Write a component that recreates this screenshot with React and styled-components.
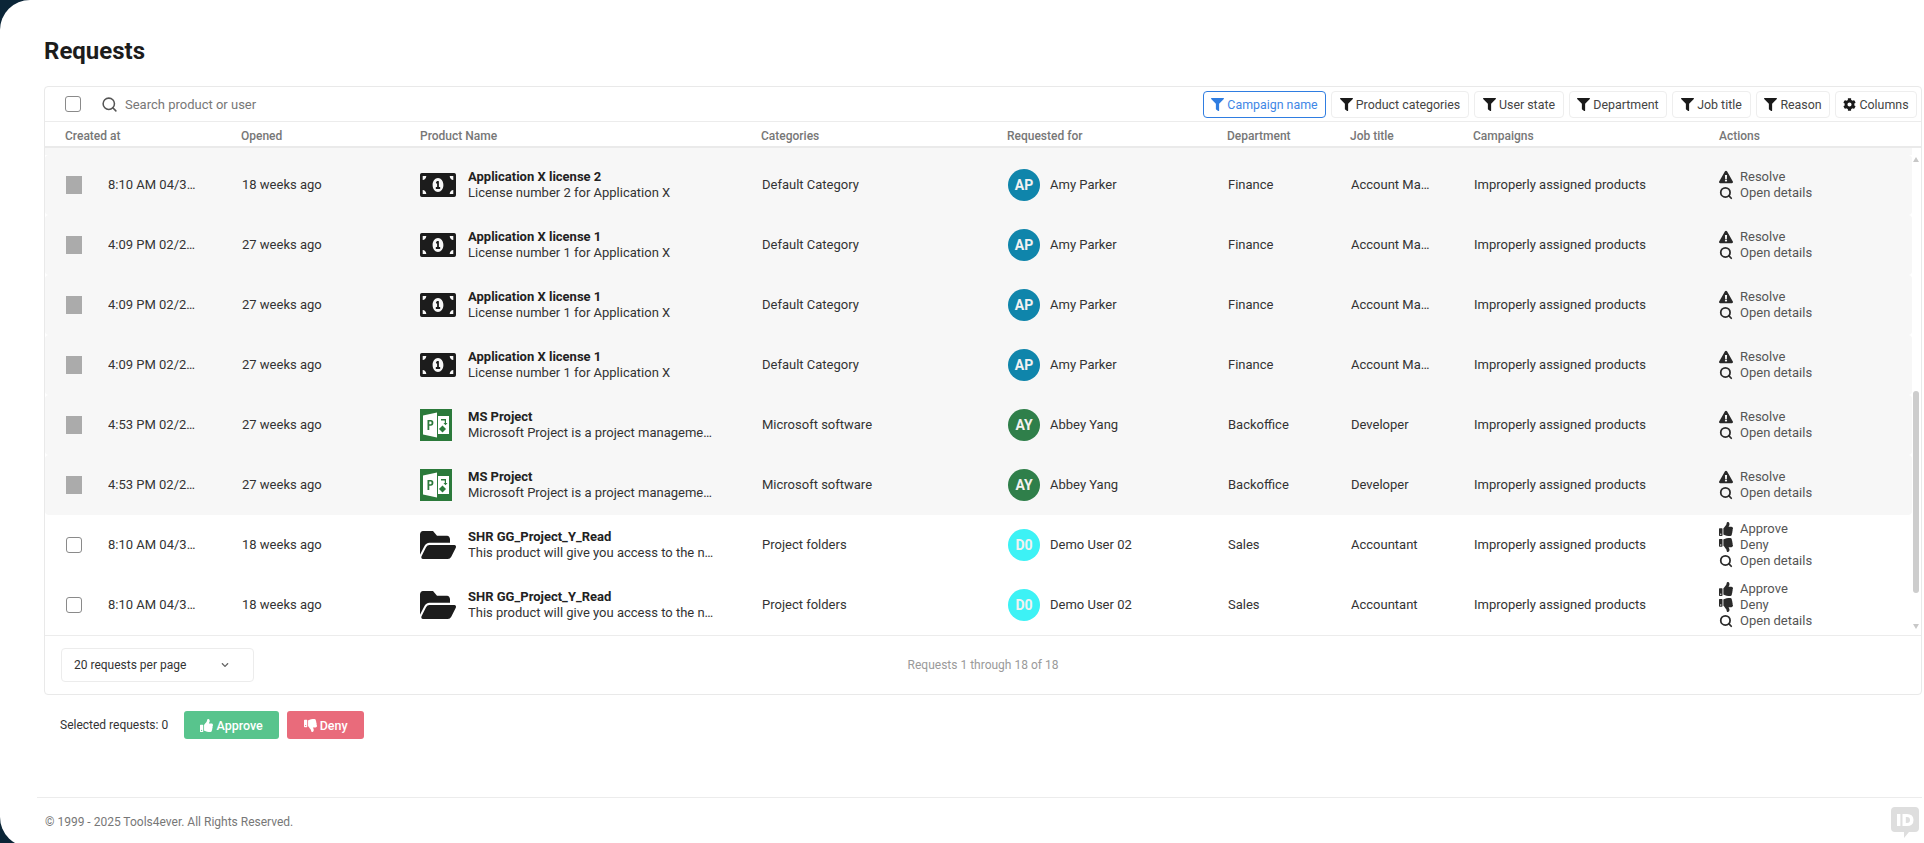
import React from "react";
import styled, { createGlobalStyle } from "styled-components";
import { Search } from "lucide-react";
import { FaExclamationTriangle, FaThumbsUp, FaThumbsDown, FaFilter, FaCog, FaFolderOpen, FaMoneyBillAlt, FaChevronDown } from "react-icons/fa";

const Global = createGlobalStyle`
  html, body { margin: 0; padding: 0; height: 100%; overflow: hidden; background: #0b2537; }
  body { font-family: Roboto, "Liberation Sans", sans-serif; font-size: 13px; color: #333; }
  * { box-sizing: border-box; }
`;

const COLS = "176px 179px 341px 246px 220px 123px 123px 246px 1fr";

const Main = styled.main`
  height: 847px;
  background: #fff;
  border-radius: 30px 0 0 30px;
  padding: 0 2px 0 37px;
  display: flex;
  flex-direction: column;
`;
const Title = styled.h1`
  margin: 0;
  height: 86px;
  padding: 35px 0 0 7px;
  font-size: 24px;
  line-height: 32px;
  font-weight: 700;
  color: #1c1c1c;
`;
const Card = styled.section`
  margin-left: 7px;
  height: 609px;
  border: 1px solid #e9e9e9;
  border-radius: 4px;
  display: flex;
  flex-direction: column;
`;
const Toolbar = styled.div`
  height: 35px;
  flex: none;
  display: flex;
  align-items: center;
  padding: 0 4px 0 20px;
  border-bottom: 1px solid #ececec;
`;
const Check = styled.span`
  width: 16px;
  height: 16px;
  flex: none;
  border: 1px solid #8a8a8a;
  border-radius: 3px;
  background: #fff;
`;
const SearchBox = styled.div`
  flex: 1;
  display: flex;
  align-items: center;
  gap: 7px;
  margin-left: 20px;
  color: #777;
  svg { color: #555; width: 17px; height: 17px; }
`;
const Filters = styled.div`
  display: flex;
  gap: 5px;
`;
const FilterBtn = styled.button`
  height: 27px;
  width: ${p => p.$w}px;
  padding: 0;
  display: flex;
  align-items: center;
  justify-content: center;
  gap: 3px;
  background: #fff;
  font: 12.4px Roboto, sans-serif;
  border-radius: 4px;
  color: ${p => (p.$active ? "#3f87e6" : "#444")};
  border: 1px solid ${p => (p.$active ? "#2f7de1" : "#eeeeee")};
  svg { width: 13px; height: 13px; color: ${p => (p.$active ? "#2f7de1" : "#1a1a1a")}; }
`;
const Head = styled.div`
  height: 26px;
  flex: none;
  display: grid;
  grid-template-columns: ${COLS};
  align-items: center;
  padding: 3px 0 0 20px;
  border-bottom: 2px solid #eaeaea;
  font-size: 12px;
  font-weight: 500;
  color: #777;
`;
const Body = styled.div`
  position: relative;
  height: 488px;
  flex: none;
  padding-right: 9px;
  border-bottom: 1px solid #ececec;
  overflow: hidden;
`;
const Sliver = styled.div`
  height: 7px;
  background: #f7f7f7;
`;
const RowWrap = styled.div`
  height: 60px;
  display: grid;
  grid-template-columns: ${COLS};
  align-items: center;
  padding-left: 20px;
  border-radius: 4px;
  background: ${p => (p.$locked ? "#f7f7f7" : "#fff")};
`;
const CreatedCell = styled.div`
  display: flex;
  align-items: center;
  padding-left: 1px;
`;
const LockedBox = styled.span`
  width: 16px;
  height: 18px;
  flex: none;
  background: #ababab;
`;
const Time = styled.span`
  margin-left: 26px;
  width: 88px;
  padding-bottom: 2px;
  white-space: nowrap;
  overflow: hidden;
  text-overflow: ellipsis;
`;
const Cell = styled.div`
  padding: 0 10px 2px 1px;
  white-space: nowrap;
  overflow: hidden;
  text-overflow: ellipsis;
`;
const JobCell = styled(Cell)`
  padding-right: 40px;
`;
const Product = styled.div`
  display: flex;
  align-items: center;
  min-width: 0;
`;
const IconSlot = styled.div`
  width: 48px;
  flex: none;
  display: flex;
  align-items: center;
  color: #1c1c1c;
`;
const ProductText = styled.div`
  width: 247px;
  padding-bottom: 1px;
  line-height: 16px;
`;
const ProductName = styled.div`
  font-weight: 700;
  color: #222;
  white-space: nowrap;
`;
const ProductDesc = styled.div`
  white-space: nowrap;
  overflow: hidden;
  text-overflow: ellipsis;
`;
const UserCell = styled.div`
  display: flex;
  align-items: center;
  gap: 10px;
  padding-left: 1px;
`;
const UserName = styled.span`
  padding-bottom: 2px;
`;
const Avatar = styled.span`
  width: 32px;
  height: 32px;
  border-radius: 50%;
  flex: none;
  display: flex;
  align-items: center;
  justify-content: center;
  color: #f2f2f2;
  font-size: 14px;
  font-weight: 700;
  background: ${p => p.$bg};
`;
const Actions = styled.div`
  display: flex;
  flex-direction: column;
  padding-bottom: 1px;
`;
const Action = styled.div`
  display: flex;
  align-items: center;
  line-height: 16px;
  color: #555;
  svg { width: 14px; height: 14px; margin-right: 7px; color: #2a2a2a; flex: none; }
`;
const Track = styled.div`
  position: absolute;
  right: 0;
  top: 0;
  bottom: 0;
  width: 10px;
`;
const Thumb = styled.div`
  position: absolute;
  left: 2px;
  right: 2px;
  top: 243px;
  height: 202px;
  background: #cdcdcd;
  border-radius: 3px;
`;
const ArrowUp = styled.div`
  position: absolute;
  left: 2px;
  top: 6px;
  border: 3px solid transparent;
  border-bottom: 5px solid #c8c8c8;
`;
const ArrowDown = styled.div`
  position: absolute;
  left: 2px;
  bottom: 3px;
  border: 3px solid transparent;
  border-top: 5px solid #c8c8c8;
`;
const Pager = styled.div`
  flex: 1;
  position: relative;
  display: flex;
  align-items: center;
  justify-content: center;
  padding: 0 16px;
  color: #9a9a9a;
  font-size: 12px;
`;
const PerPage = styled.div`
  position: absolute;
  left: 16px;
  top: 12px;
  width: 193px;
  height: 34px;
  display: flex;
  align-items: center;
  justify-content: space-between;
  padding: 0 24px 0 12px;
  border: 1px solid #ececec;
  border-radius: 4px;
  color: #333;
  font-size: 12px;
  svg { width: 8px; height: 8px; color: #666; }
`;
const Selected = styled.div`
  margin: 16px 0 0 23px;
  display: flex;
  align-items: center;
  height: 28px;
  font-size: 12px;
  color: #333;
`;
const BulkBtn = styled.button`
  height: 28px;
  width: ${p => p.$w}px;
  margin-left: ${p => p.$ml}px;
  display: flex;
  align-items: center;
  justify-content: center;
  gap: 3px;
  border: none;
  border-radius: 3px;
  color: #fff;
  font: 500 12.5px Roboto, sans-serif;
  background: ${p => p.$bg};
  svg { width: 13px; height: 13px; }
`;
const Footer = styled.footer`
  margin-top: 58px;
  height: 50px;
  position: relative;
  border-top: 1px solid #ececec;
  padding: 16px 0 0 8px;
  font-size: 12px;
  line-height: 17px;
  color: #777;
`;
const Badge = styled.div`
  position: absolute;
  right: 3px;
  top: 9px;
  width: 28px;
  height: 31px;
`;
const LicenseIcon = styled(FaMoneyBillAlt)`
  width: 36px;
  height: 24px;
`;
const FolderIcon = styled(FaFolderOpen)`
  width: 36px;
  height: 28px;
`;

const License = () => <LicenseIcon viewBox="0 64 640 384" preserveAspectRatio="none" />;
const Folder = () => <FolderIcon viewBox="0 64 576 384" preserveAspectRatio="none" />;
const MsProject = () => (
  <svg width="32" height="32" viewBox="0 0 32 32">
    <rect width="32" height="32" fill="#2b7a3b" />
    <path d="M3 6.5 L17 3.5 V28.5 L3 25.5 Z" fill="#fff" />
    <path d="M18 7 H29 V25 H18 Z" fill="#fff" />
    <path d="M7.5 11 h3.3 q2.6 0 2.6 2.8 q0 2.9 -2.6 2.9 h-1.5 v4.3 h-1.8 Z M9.3 12.6 v2.6 h1.2 q1.1 0 1.1 -1.3 q0 -1.3 -1.1 -1.3 Z" fill="#2b7a3b" />
    <path d="M21 10 h5 v4 h1.5 l-2 2.2 l-2 -2.2 h1.3 v-2.5 h-3.8 Z" fill="#2b7a3b" />
    <rect x="20" y="17.5" width="5" height="5" transform="rotate(45 22.5 20)" fill="#2b7a3b" />
  </svg>
);

const lic = (t, d) => ({ icon: <License />, name: t, desc: d, cat: "Default Category" });
const ap = { av: "AP", bg: "#0f85ab", user: "Amy Parker", dep: "Finance", job: "Account Manager" };
const ay = { av: "AY", bg: "#2f7f4a", user: "Abbey Yang", dep: "Backoffice", job: "Developer" };
const d0 = { av: "D0", bg: "#3df2f5", user: "Demo User 02", dep: "Sales", job: "Accountant" };
const ms = { icon: <MsProject />, name: "MS Project", desc: "Microsoft Project is a project management software product", cat: "Microsoft software" };
const shr = { icon: <Folder />, name: "SHR GG_Project_Y_Read", desc: "This product will give you access to the network folder", cat: "Project folders" };
const l1 = lic("Application X license 1", "License number 1 for Application X");
const APR = "8:10 AM 04/30/2025", FEB = "4:09 PM 02/27/2025", FEB2 = "4:53 PM 02/27/2025";

const rows = [
  { time: APR, ago: "18 weeks ago", ...lic("Application X license 2", "License number 2 for Application X"), ...ap, locked: true },
  { time: FEB, ago: "27 weeks ago", ...l1, ...ap, locked: true },
  { time: FEB, ago: "27 weeks ago", ...l1, ...ap, locked: true },
  { time: FEB, ago: "27 weeks ago", ...l1, ...ap, locked: true },
  { time: FEB2, ago: "27 weeks ago", ...ms, ...ay, locked: true },
  { time: FEB2, ago: "27 weeks ago", ...ms, ...ay, locked: true },
  { time: APR, ago: "18 weeks ago", ...shr, ...d0 },
  { time: APR, ago: "18 weeks ago", ...shr, ...d0 },
];
const heads = ["Created at", "Opened", "Product Name", "Categories", "Requested for", "Department", "Job title", "Campaigns", "Actions"];
const filters = [
  ["Campaign name", 123],
  ["Product categories", 138],
  ["User state", 90],
  ["Department", 98],
  ["Job title", 79],
  ["Reason", 74],
];

export default function App() {
  return (
    <>
      <Global />
      <Main>
        <Title>Requests</Title>
        <Card>
          <Toolbar>
            <Check />
            <SearchBox><Search strokeWidth={2.2} />Search product or user</SearchBox>
            <Filters>
              {filters.map(([f, w], i) => (
                <FilterBtn key={f} $w={w} $active={i === 0}><FaFilter />{f}</FilterBtn>
              ))}
              <FilterBtn $w={82}><FaCog />Columns</FilterBtn>
            </Filters>
          </Toolbar>
          <Head>{heads.map(h => <div key={h}>{h}</div>)}</Head>
          <Body>
            <Sliver />
            {rows.map((r, i) => (
              <RowWrap key={i} $locked={r.locked}>
                <CreatedCell>
                  {r.locked ? <LockedBox /> : <Check />}
                  <Time>{r.time}</Time>
                </CreatedCell>
                <Cell>{r.ago}</Cell>
                <Product>
                  <IconSlot>{r.icon}</IconSlot>
                  <ProductText>
                    <ProductName>{r.name}</ProductName>
                    <ProductDesc>{r.desc}</ProductDesc>
                  </ProductText>
                </Product>
                <Cell>{r.cat}</Cell>
                <UserCell><Avatar $bg={r.bg}>{r.av}</Avatar><UserName>{r.user}</UserName></UserCell>
                <Cell>{r.dep}</Cell>
                <JobCell>{r.job}</JobCell>
                <Cell>Improperly assigned products</Cell>
                <Actions>
                  {r.locked ? (
                    <Action><FaExclamationTriangle />Resolve</Action>
                  ) : (
                    <>
                      <Action><FaThumbsUp />Approve</Action>
                      <Action><FaThumbsDown />Deny</Action>
                    </>
                  )}
                  <Action><Search strokeWidth={3} />Open details</Action>
                </Actions>
              </RowWrap>
            ))}
            <Track><ArrowUp /><Thumb /><ArrowDown /></Track>
          </Body>
          <Pager>
            <PerPage>20 requests per page<FaChevronDown /></PerPage>
            Requests 1 through 18 of 18
          </Pager>
        </Card>
        <Selected>
          Selected requests: 0
          <BulkBtn $w={95} $ml={16} $bg="#58c48d"><FaThumbsUp />Approve</BulkBtn>
          <BulkBtn $w={77} $ml={8} $bg="#e96b7b"><FaThumbsDown />Deny</BulkBtn>
        </Selected>
        <Footer>
          © 1999 - 2025 Tools4ever. All Rights Reserved.
          <Badge>
            <svg width="28" height="31" viewBox="0 0 28 31">
              <path d="M4 0 H24 Q28 0 28 4 V21 Q28 25 24 25 H18 L13 31 V25 H4 Q0 25 0 21 V4 Q0 0 4 0 Z" fill="#dedede" />
              <rect x="6" y="7" width="3.4" height="12" fill="#fff" />
              <path d="M11.5 7 H16 Q22.5 7 22.5 13 Q22.5 19 16 19 H11.5 Z M14.8 10 V16 H16 Q19 16 19 13 Q19 10 16 10 Z" fill="#fff" fillRule="evenodd" />
            </svg>
          </Badge>
        </Footer>
      </Main>
    </>
  );
}
